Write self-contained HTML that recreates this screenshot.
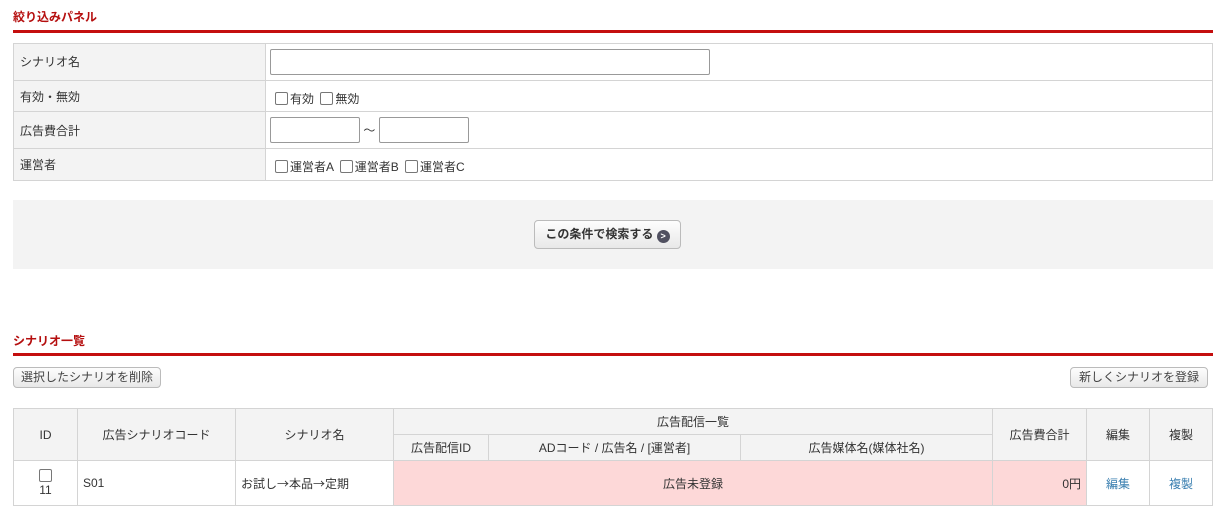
<!DOCTYPE html><html><head><meta charset="utf-8"><style>
body{margin:0;width:1232px;height:513px;background:#fff;font-family:"Liberation Sans","Noto Sans CJK JP",sans-serif;font-size:12px;color:#333;position:relative;overflow:hidden}
.a{position:absolute}
.t{color:#b50f0f;font-weight:bold;font-size:12px}
.rl{height:3px;background:#c40e0e;left:13px;width:1200px}
table{border-collapse:collapse;position:absolute}
td,th{border:1px solid #d4d4d4;padding:0;font-weight:normal}
.ft td.l{background:#f3f3f3;padding-left:6px}
input[type=text]{border:1px solid #999;border-radius:2px;height:24px;box-sizing:border-box;margin:0}
.cb{display:inline-block;width:11px;height:11px;border:1px solid #777;border-radius:2px;vertical-align:-2px;margin-right:2px;background:#fff}
.btn{border:1px solid #bbb;border-radius:4px;background:linear-gradient(#fdfdfd,#e8e8e8);text-align:center;box-sizing:border-box;color:#444}
.lt th{background:#f3f3f3;text-align:center}
.lt td{height:44px}
.j{font-family:"Noto Sans CJK JP",sans-serif}
</style></head><body>
<div class="a t" style="left:13px;top:8px">絞り込みパネル</div>
<div class="a rl" style="top:30px"></div>
<table class="ft" style="left:13px;top:43px;width:1200px">
<tr style="height:37px"><td class="l" style="width:245px;vertical-align:top;padding-top:9px">シナリオ名</td><td style="padding-left:4px"><input type="text" style="width:440px;height:26px"></td></tr>
<tr style="height:31px"><td class="l">有効・無効</td><td style="padding-left:9px;padding-top:4px"><span class="cb"></span>有効 <span class="cb" style="margin-left:3px"></span>無効</td></tr>
<tr style="height:37px"><td class="l">広告費合計</td><td style="padding-left:4px"><input type="text" style="width:90px;height:26px"> <span class="j">〜</span> <input type="text" style="width:90px;height:26px"></td></tr>
<tr style="height:32px"><td class="l">運営者</td><td style="padding-left:9px;padding-top:3px"><span class="cb"></span>運営者A <span class="cb" style="margin-left:3px"></span>運営者B <span class="cb" style="margin-left:3px"></span>運営者C</td></tr>
</table>
<div class="a" style="left:13px;top:200px;width:1200px;height:69px;background:#f3f3f3"></div>
<div class="a btn" style="left:534px;top:220px;width:147px;height:29px;line-height:27px;font-weight:bold;color:#333">この条件で検索する <span style="display:inline-block;width:13px;height:13px;border-radius:50%;background:#505060;color:#fff;font-size:9px;line-height:13px;vertical-align:-1px">&gt;</span></div>
<div class="a t" style="left:13px;top:332px">シナリオ一覧</div>
<div class="a rl" style="top:353px"></div>
<div class="a btn" style="left:13px;top:367px;width:148px;height:21px;line-height:19px">選択したシナリオを削除</div>
<div class="a btn" style="left:1070px;top:367px;width:138px;height:21px;line-height:19px">新しくシナリオを登録</div>
<table class="lt" style="left:13px;top:408px;width:1200px">
<tr style="height:26px"><th rowspan="2" style="width:63px">ID</th><th rowspan="2" style="width:157px">広告シナリオコード</th><th rowspan="2" style="width:157px">シナリオ名</th><th colspan="3">広告配信一覧</th><th rowspan="2" style="width:93px">広告費合計</th><th rowspan="2" style="width:62px">編集</th><th rowspan="2">複製</th></tr>
<tr style="height:26px"><th style="width:94px">広告配信ID</th><th style="width:251px">ADコード / 広告名 / [運営者]</th><th style="width:251px">広告媒体名(媒体社名)</th></tr>
<tr><td style="text-align:center;line-height:14px"><span class="cb" style="margin:0"></span><br>11</td><td style="padding-left:5px">S01</td><td style="padding-left:5px" class="j">お試し→本品→定期</td><td colspan="3" style="background:#fdd8d8;text-align:center">広告未登録</td><td style="background:#fdd8d8;text-align:right;padding-right:5px">0円</td><td style="text-align:center;color:#3a7fb0">編集</td><td style="text-align:center;color:#3a7fb0">複製</td></tr>
</table>
</body></html>
